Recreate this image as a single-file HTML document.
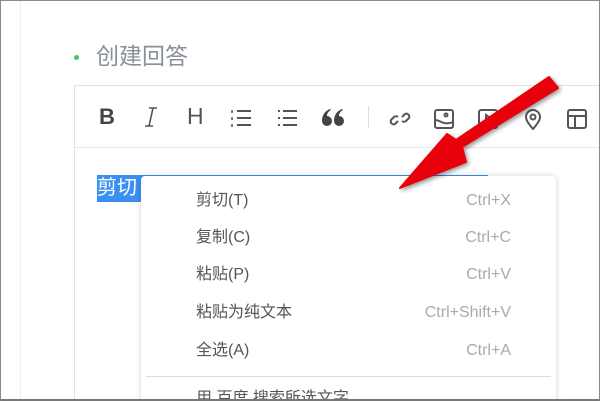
<!DOCTYPE html>
<html><head><meta charset="utf-8"><style>
html,body{margin:0;width:600px;height:401px;overflow:hidden}
body{background:#fff;font-family:"Liberation Sans","Noto Sans CJK SC",sans-serif;position:relative}
.frame{position:absolute;left:0;top:0;width:598px;height:398px;border:1px solid #8a8a8a;border-bottom:2px solid #777}
.vl{position:absolute;left:20px;top:0;width:1px;height:401px;background:#eee}
.editor{position:absolute;left:74px;top:85px;width:540px;height:330px;border:1px solid #e2e2e2}
.tb{position:absolute;left:0;top:0;right:0;height:61px;border-bottom:1px solid #e6e6e6}
.title{position:absolute;left:96px;top:42px;font-size:23px;line-height:28px;color:#8a9099}
.dot{position:absolute;left:74px;top:55px;width:5px;height:5px;border-radius:50%;background:#3ec46d}
.ic{position:absolute;top:22px}
.sel{position:absolute;left:97px;top:175px;width:45px;height:27px;background:#3b8ff0;color:#fff;font-size:20px;line-height:27px}
.bl{position:absolute;left:140px;top:175px;width:348px;height:2px;background:#3b8ff0}
.menu{position:absolute;left:141px;top:176px;width:415px;height:240px;background:#fff;border-radius:4px;box-shadow:0 0 6px rgba(0,0,0,.18)}
.it,.sc{position:absolute;font-size:16px;line-height:22px;height:22px}
.it{left:55px;color:#555}
.sc{right:45px;color:#aaa}
.sep{position:absolute;left:5px;right:5px;top:200px;height:1px;background:#ddd}
</style></head><body>
<div class="vl"></div>
<div class="dot"></div>
<div class="title">创建回答</div>
<div class="editor"><div class="tb">
<div class="ic" style="left:24px;top:18px;font-size:22px;font-weight:bold;color:#444">B</div>
<svg class="ic" style="left:68px;top:21px" width="16" height="20" stroke="#555" stroke-width="1.6"><path d="M6 1h8M2 19h8M10 1L6 19"/></svg>
<div class="ic" style="left:112px;top:17px;font-size:23px;color:#555">H</div>
<svg class="ic" style="left:155px" width="22" height="20" stroke="#555" stroke-width="2"><path d="M7 3h14M7 10h14M7 17h14"/><path d="M2 2v3M2 9v3M2 16v3" stroke-width="1.5"/></svg>
<svg class="ic" style="left:201px" width="22" height="20" stroke="#555" stroke-width="2"><path d="M7 3h14M7 10h14M7 17h14M2 3h2M2 10h2M2 17h2"/></svg>
<svg class="ic" style="left:245px;top:22px" width="26" height="20" fill="#444"><path d="M2 13a5 5 0 1 0 5-5c0-3 2-5 4-6l-1-1c-5 2-8 6-8 12zM14 13a5 5 0 1 0 5-5c0-3 2-5 4-6l-1-1c-5 2-8 6-8 12z"/></svg>
<div style="position:absolute;left:293px;top:20px;width:1px;height:22px;background:#ddd"></div>
<svg class="ic" style="left:314px" width="22" height="22" fill="none" stroke="#555" stroke-width="2"><path d="M9 13l-3 3a3 3 0 0 1-4-4l3-3a3 3 0 0 1 4 0M13 9l3-3a3 3 0 0 1 4 4l-3 3a3 3 0 0 1-4 0"/></svg>
<svg class="ic" style="left:358px" width="22" height="22" fill="none" stroke="#555" stroke-width="2"><rect x="2" y="2" width="18" height="18" rx="2"/><circle cx="13" cy="7" r="1.5"/><path d="M2 12c6 0 8 6 18 2"/></svg>
<svg class="ic" style="left:402px" width="22" height="22" fill="none" stroke="#555" stroke-width="2"><rect x="2" y="2" width="18" height="18" rx="2"/><path d="M9 7v8l6-4z"/></svg>
<svg class="ic" style="left:447px" width="22" height="22" fill="none" stroke="#555" stroke-width="2"><path d="M11 21c-5-6-7-9-7-12a7 7 0 0 1 14 0c0 3-2 6-7 12z"/><circle cx="11" cy="9" r="2.5"/></svg>
<svg class="ic" style="left:491px" width="22" height="22" fill="none" stroke="#555" stroke-width="2"><rect x="2" y="2" width="18" height="18" rx="2"/><path d="M2 8h18M9 8v12"/></svg>
</div></div>
<div class="sel">剪切</div><div class="bl"></div>
<div class="menu">
<div class="it" style="top:14px">剪切(T)</div><div class="sc" style="top:14px">Ctrl+X</div>
<div class="it" style="top:51px">复制(C)</div><div class="sc" style="top:51px">Ctrl+C</div>
<div class="it" style="top:88px">粘贴(P)</div><div class="sc" style="top:88px">Ctrl+V</div>
<div class="it" style="top:126px">粘贴为纯文本</div><div class="sc" style="top:126px">Ctrl+Shift+V</div>
<div class="it" style="top:164px">全选(A)</div><div class="sc" style="top:164px">Ctrl+A</div>
<div class="sep"></div>
<div class="it" style="top:212px">用 百度 搜索所选文字</div>
</div>
<svg style="position:absolute;left:0;top:0" width="600" height="401">
<path d="M549 77L558 88L462 147L466 162L400 188L447 134L456 140Z" fill="#e8000a" stroke="#e8000a" stroke-width="2" stroke-linejoin="round" style="filter:drop-shadow(2px 2px 2px rgba(0,0,0,.4))"/>
</svg>
<div class="frame"></div>
</body></html>
